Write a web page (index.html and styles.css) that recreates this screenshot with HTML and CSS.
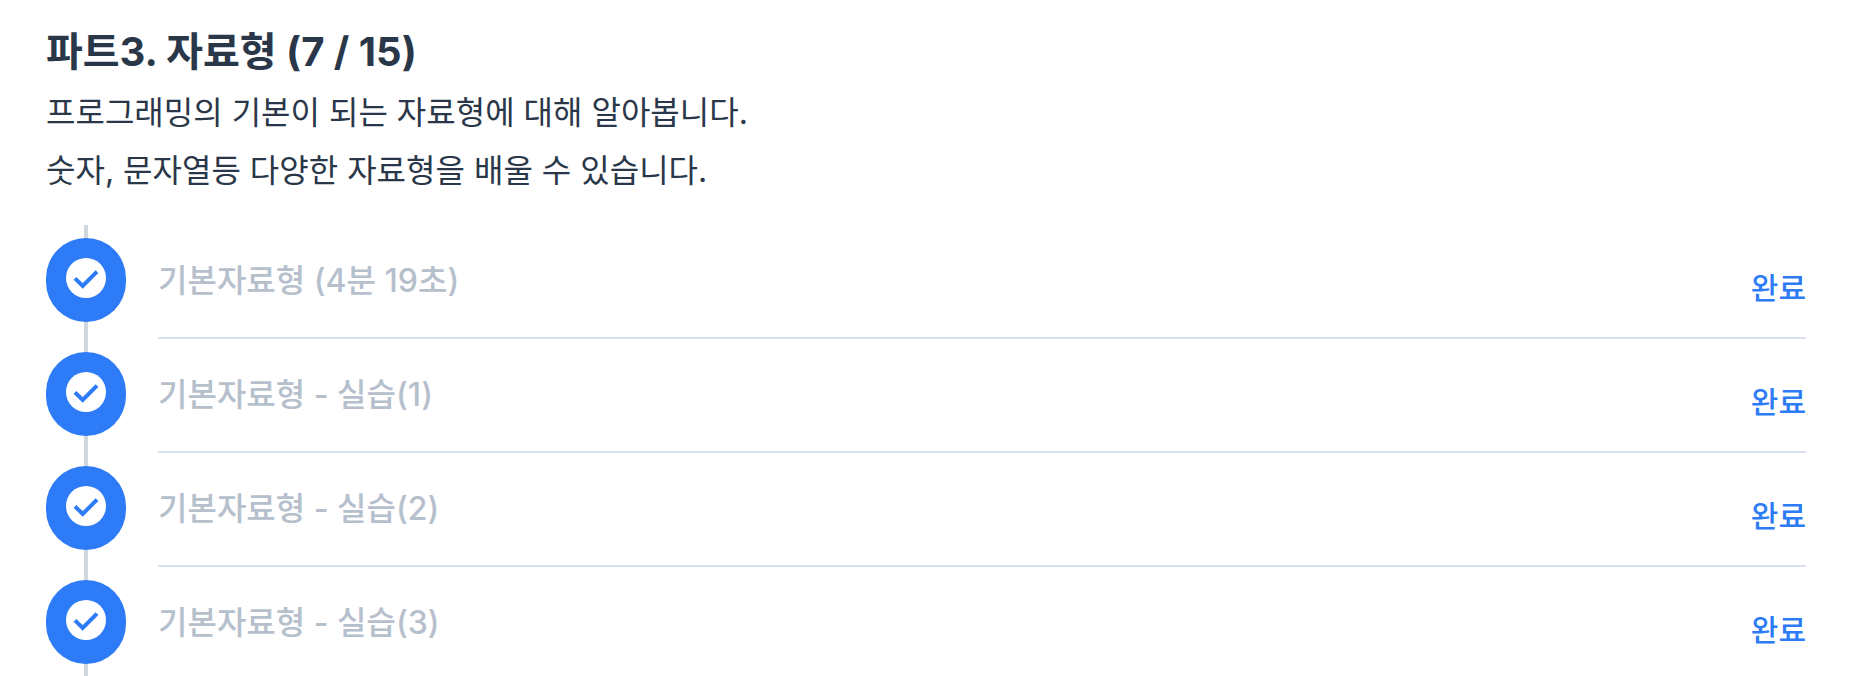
FILE: index.html
```html
<!DOCTYPE html>
<html lang="ko">
<head>
    <meta charset="UTF-8">
    <meta name="viewport" content="width=device-width, initial-scale=1.0">
    <title>파트3. 자료형</title>
    <link rel="stylesheet" href="styles.css">
</head>
<body>

    <!-- check icon shared by every lesson -->
    <svg class="icon-defs" aria-hidden="true">
        <symbol id="check" viewBox="0 0 40 40">
            <circle cx="20" cy="20" r="20" fill="#fff"/>
            <path d="M9 20.3l7.7 7.7L31 13.7" fill="none" stroke="currentColor" stroke-width="4"/>
        </symbol>
    </svg>

    <main class="part">
        <h1>파트3. 자료형 (7 / 15)</h1>
        <p class="description">
            프로그래밍의 기본이 되는 자료형에 대해 알아봅니다.<br>
            숫자, 문자열등 다양한 자료형을 배울 수 있습니다.
        </p>

        <ul class="lesson-list">
            <li class="lesson">
                <div class="rail">
                    <span class="marker"><svg class="check"><use href="#check"/></svg></span>
                </div>
                <div class="lesson-body">
                    <span class="lesson-title">기본자료형 (4분 19초)</span>
                    <span class="lesson-status">완료</span>
                </div>
            </li>
            <li class="lesson">
                <div class="rail">
                    <span class="marker"><svg class="check"><use href="#check"/></svg></span>
                </div>
                <div class="lesson-body">
                    <span class="lesson-title">기본자료형 - 실습(1)</span>
                    <span class="lesson-status">완료</span>
                </div>
            </li>
            <li class="lesson">
                <div class="rail">
                    <span class="marker"><svg class="check"><use href="#check"/></svg></span>
                </div>
                <div class="lesson-body">
                    <span class="lesson-title">기본자료형 - 실습(2)</span>
                    <span class="lesson-status">완료</span>
                </div>
            </li>
            <li class="lesson">
                <div class="rail">
                    <span class="marker"><svg class="check"><use href="#check"/></svg></span>
                </div>
                <div class="lesson-body">
                    <span class="lesson-title">기본자료형 - 실습(3)</span>
                    <span class="lesson-status">완료</span>
                </div>
            </li>
        </ul>
    </main>

</body>
</html>
```
FILE: styles.css
```css
* {
    box-sizing: border-box;
}

body {
    margin: 0;
    font-family: Inter, "Noto Sans CJK KR", sans-serif;
    font-size: 32px;
    color: #2a3749;
    background-color: #fff;
}

.icon-defs {
    display: none;
}

.part {
    padding: 24px 64px 0 46px;
}

h1 {
    margin: 0;
    font-size: 40px;
    font-weight: 700;
    line-height: 56px;
}

.description {
    margin: 4px 0 25px;
    line-height: 58px;
}

.lesson-list {
    list-style-type: none;
    margin: 0;
    padding: 0;
}

.lesson {
    display: flex;
    gap: 32px;
    height: 114px;
}

/* vertical line that runs behind the markers */
.rail {
    width: 80px;
    padding-top: 13px;
    background: linear-gradient(#cfd6dd, #cfd6dd) center / 4px 100% no-repeat;
}

.marker {
    display: block;
    height: 84px;
    padding: 20px;
    border-radius: 40px;
    background-color: #2d7bf6;
    color: #2d7bf6;
}

.check {
    display: block;
    width: 40px;
    height: 40px;
}

.lesson-body {
    flex: 1;
    display: flex;
    justify-content: space-between;
    align-items: center;
    padding-bottom: 6px;
    border-bottom: 2px solid #d9e2ea;
}

.lesson:last-child .lesson-body {
    border-bottom-color: transparent;
}

.lesson-title {
    font-weight: 500;
    color: #b6c0cc;
}

.lesson-status {
    padding-top: 16px;
    font-size: 30px;
    font-weight: 500;
    color: #2d7bf6;
}
```
